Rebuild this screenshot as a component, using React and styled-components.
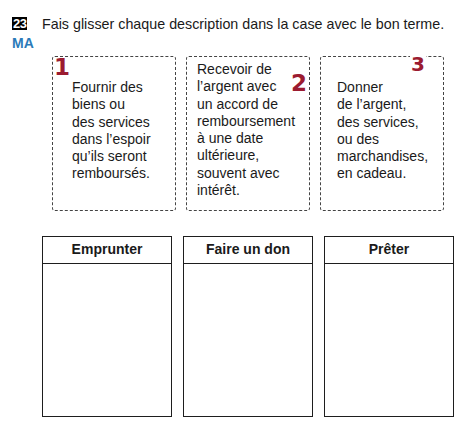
import React from 'react'
import styled, { createGlobalStyle } from 'styled-components'

const GlobalStyle = createGlobalStyle`
  body {
    margin: 0;
    background: #fff;
    font-family: "Liberation Sans", Arial, sans-serif;
    color: #1a1a1a;
  }
`

const Page = styled.div`
  width: 473px;
  height: 440px;
  padding: 17px 0 0 12px;
  box-sizing: border-box;
`

const Header = styled.div`
  display: flex;
  align-items: flex-start;
`

const Tag = styled.div`
  width: 30px;
  display: flex;
  flex-direction: column;
  align-items: flex-start;
`

const Badge = styled.div`
  background: #000;
  color: #fff;
  font-weight: 700;
  font-size: 13px;
  line-height: 13px;
  height: 13px;
  padding: 0 1px;
  letter-spacing: -0.5px;
`

const Code = styled.div`
  color: #2b7bb9;
  font-weight: 700;
  font-size: 14px;
  line-height: 14px;
  margin-top: 6px;
`

const Prompt = styled.div`
  font-size: 14.3px;
  line-height: 14px;
  margin-top: 0;
`

const Cards = styled.div`
  display: flex;
  gap: 10px;
  margin: 6px 0 0 40px;
`

const Card = styled.div`
  position: relative;
  width: 124px;
  height: 155px;
  box-sizing: border-box;
  border: 1px dashed #444;
  border-radius: 3px;
  padding: ${p => p.$pad};
  font-size: 14px;
  line-height: 17.3px;
  white-space: pre-line;
`

const Num = styled.span`
  position: absolute;
  color: #9b1b30;
  font-family: "DejaVu Sans", sans-serif;
  font-weight: 700;
  font-size: ${p => p.$size}px;
  line-height: 1;
  background: ${p => (p.$cover ? '#fff' : 'transparent')};
  padding: 0 1px;
  top: ${p => p.$top}px;
  ${p => (p.$right != null ? `right: ${p.$right}px;` : `left: ${p.$left}px;`)}
`

const Boxes = styled.div`
  display: flex;
  gap: 11px;
  margin: 25px 0 0 30px;
`

const Box = styled.div`
  width: 130px;
  height: 181px;
  box-sizing: border-box;
  border: 1.5px solid #1e1e1e;
  display: flex;
  flex-direction: column;
`

const BoxTitle = styled.div`
  height: 27px;
  box-sizing: border-box;
  border-bottom: 1.5px solid #1e1e1e;
  font-weight: 700;
  font-size: 14px;
  text-align: center;
  padding-top: 4px;
`

const cards = [
  {
    n: '1', pad: '22px 0 0 19px', num: { $left: 0, $top: -1, $size: 23 },
    text: 'Fournir des\nbiens ou\ndes services\ndans l’espoir\nqu’ils seront\nremboursés.'
  },
  {
    n: '2', pad: '4px 0 0 10px', num: { $right: 1, $top: 15, $size: 23 },
    text: 'Recevoir de\nl’argent avec\nun accord de\nremboursement\nà une date\nultérieure,\nsouvent avec\nintérêt.'
  },
  {
    n: '3', pad: '22px 0 0 16px', num: { $right: 17, $top: -3, $size: 20, $cover: true },
    text: 'Donner\nde l’argent,\ndes services,\nou des\nmarchandises,\nen cadeau.'
  }
]

const terms = ['Emprunter', 'Faire un don', 'Prêter']

export default function App() {
  return (
    <>
      <GlobalStyle />
      <Page>
        <Header>
          <Tag>
            <Badge>23</Badge>
            <Code>MA</Code>
          </Tag>
          <Prompt>Fais glisser chaque description dans la case avec le bon terme.</Prompt>
        </Header>
        <Cards>
          {cards.map(c => (
            <Card key={c.n} $pad={c.pad}>
              <Num {...c.num}>{c.n}</Num>
              {c.text}
            </Card>
          ))}
        </Cards>
        <Boxes>
          {terms.map(t => (
            <Box key={t}>
              <BoxTitle>{t}</BoxTitle>
            </Box>
          ))}
        </Boxes>
      </Page>
    </>
  )
}
